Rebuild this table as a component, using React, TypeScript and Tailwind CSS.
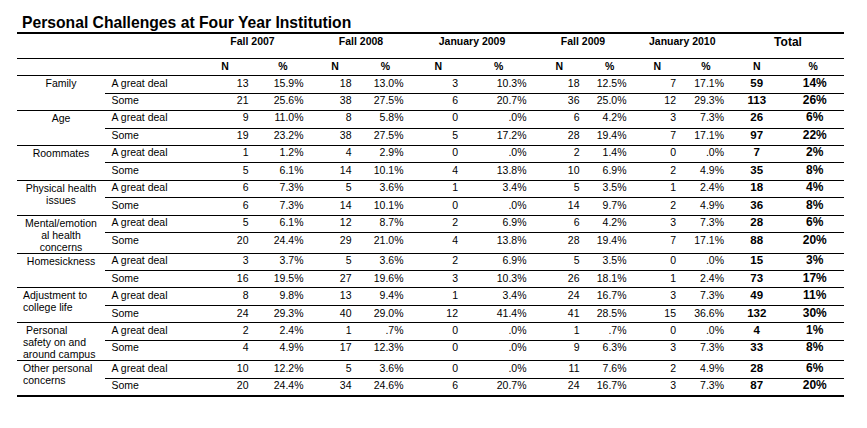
import React from 'react';

type Group = {
    label: React.ReactNode;
    align: 'center' | 'left';
    rows: [string[], string[]];
};

const groups: Group[] = [
    { label: 'Family', align: 'center', rows: [
        ['13', '15.9%', '18', '13.0%', '3', '10.3%', '18', '12.5%', '7', '17.1%', '59', '14%'],
        ['21', '25.6%', '38', '27.5%', '6', '20.7%', '36', '25.0%', '12', '29.3%', '113', '26%'],
    ] },
    { label: 'Age', align: 'center', rows: [
        ['9', '11.0%', '8', '5.8%', '0', '.0%', '6', '4.2%', '3', '7.3%', '26', '6%'],
        ['19', '23.2%', '38', '27.5%', '5', '17.2%', '28', '19.4%', '7', '17.1%', '97', '22%'],
    ] },
    { label: 'Roommates', align: 'center', rows: [
        ['1', '1.2%', '4', '2.9%', '0', '.0%', '2', '1.4%', '0', '.0%', '7', '2%'],
        ['5', '6.1%', '14', '10.1%', '4', '13.8%', '10', '6.9%', '2', '4.9%', '35', '8%'],
    ] },
    { label: <>Physical health<br />issues</>, align: 'center', rows: [
        ['6', '7.3%', '5', '3.6%', '1', '3.4%', '5', '3.5%', '1', '2.4%', '18', '4%'],
        ['6', '7.3%', '14', '10.1%', '0', '.0%', '14', '9.7%', '2', '4.9%', '36', '8%'],
    ] },
    { label: <>Mental/emotion<br />al health<br />concerns</>, align: 'center', rows: [
        ['5', '6.1%', '12', '8.7%', '2', '6.9%', '6', '4.2%', '3', '7.3%', '28', '6%'],
        ['20', '24.4%', '29', '21.0%', '4', '13.8%', '28', '19.4%', '7', '17.1%', '88', '20%'],
    ] },
    { label: 'Homesickness', align: 'center', rows: [
        ['3', '3.7%', '5', '3.6%', '2', '6.9%', '5', '3.5%', '0', '.0%', '15', '3%'],
        ['16', '19.5%', '27', '19.6%', '3', '10.3%', '26', '18.1%', '1', '2.4%', '73', '17%'],
    ] },
    { label: <>Adjustment to<br />college life</>, align: 'left', rows: [
        ['8', '9.8%', '13', '9.4%', '1', '3.4%', '24', '16.7%', '3', '7.3%', '49', '11%'],
        ['24', '29.3%', '40', '29.0%', '12', '41.4%', '41', '28.5%', '15', '36.6%', '132', '30%'],
    ] },
    { label: <>{'\u00a0'}Personal<br />safety on and<br />around campus</>, align: 'left', rows: [
        ['2', '2.4%', '1', '.7%', '0', '.0%', '1', '.7%', '0', '.0%', '4', '1%'],
        ['4', '4.9%', '17', '12.3%', '0', '.0%', '9', '6.3%', '3', '7.3%', '33', '8%'],
    ] },
    { label: <>Other personal<br />concerns</>, align: 'left', rows: [
        ['10', '12.2%', '5', '3.6%', '0', '.0%', '11', '7.6%', '2', '4.9%', '28', '6%'],
        ['20', '24.4%', '34', '24.6%', '6', '20.7%', '24', '16.7%', '3', '7.3%', '87', '20%'],
    ] },
];

// width + alignment for the 12 number columns
const cols = [
    { head: 'N', cls: 'w-[61px] text-right pr-[7px]' },
    { head: '%', cls: 'w-[55px] text-right pr-[7px]' },
    { head: 'N', cls: 'w-[49px] text-right pr-[8px]' },
    { head: '%', cls: 'w-[52px] text-right pr-[8px]' },
    { head: 'N', cls: 'w-[53.5px] text-right pr-[7px]' },
    { head: '%', cls: 'w-[67.5px] text-right pr-[6px]' },
    { head: 'N', cls: 'w-[53.5px] text-right pr-[6.5px]' },
    { head: '%', cls: 'w-[47.5px] text-right pr-[7px]' },
    { head: 'N', cls: 'w-[47.5px] text-right pr-[5px]' },
    { head: '%', cls: 'w-[50px] text-right pr-[7px]' },
    { head: 'N', cls: 'w-[51.5px] text-center font-bold text-[11.5px]' },
    { head: '%', cls: 'w-[61.5px] text-center font-bold text-[12px] pl-[3px]' },
];

const headWidths = ['w-[61px]', 'w-[55px]', 'w-[49px]', 'w-[52px]', 'w-[53.5px]', 'w-[67.5px]', 'w-[53.5px]', 'w-[47.5px]', 'w-[47.5px]', 'w-[50px]', 'w-[51.5px]', 'w-[61.5px]'];

const periods = [
    { name: 'Fall 2007', cls: 'w-[116px]' },
    { name: 'Fall 2008', cls: 'w-[101px]' },
    { name: 'January 2009', cls: 'w-[121px]' },
    { name: 'Fall 2009', cls: 'w-[101px]' },
    { name: 'January 2010', cls: 'w-[97.5px]' },
];

const DataRow: React.FC<{ label: string; values: string[]; last?: boolean }> = ({ label, values, last }) => (
    <div className={last ? 'flex flex-1 min-h-[16.2px] pt-[0.5px] leading-[12px]' : 'flex h-[16.2px] box-content border-b border-black pt-[0.5px] leading-[12px]'}>
        <div className="w-[89.5px] pl-[6.5px]">{label}</div>
        {values.map((v, i) => (
            <div key={i} className={cols[i].cls}>{v}</div>
        ))}
    </div>
);

export default function App() {
    return (
        <div className="min-h-screen bg-white pt-[14px] pl-[17px] text-black font-['Liberation_Sans',Arial,sans-serif]">
            <h1 className="pl-[5px] text-[15.7px] font-bold leading-[17px]">Personal Challenges at Four Year Institution</h1>
            <div className="mt-[1px] w-[827px] border-t-2 border-b-2 border-black text-[10.5px]">
                {/* header: periods */}
                <div className="flex h-[25px] border-b border-black font-bold leading-[12px]">
                    <div className="w-[177.5px]" />
                    {periods.map((p) => (
                        <div key={p.name} className={`${p.cls} text-center pt-[1px]`}>{p.name}</div>
                    ))}
                    <div className="w-[113px] text-center text-[12px] pt-[2px] pl-[1px]">Total</div>
                </div>
                {/* header: N / % */}
                <div className="flex h-[17px] border-b border-black font-bold leading-[12px] pt-[1px]">
                    <div className="w-[177.5px]" />
                    {cols.map((c, i) => (
                        <div key={i} className={`${headWidths[i]} text-center`}>{c.head}</div>
                    ))}
                </div>
                {groups.map((g, gi) => (
                    <div key={gi} className={gi === groups.length - 1 ? 'flex' : 'flex border-b border-black'}>
                        <div className={g.align === 'center' ? 'w-[88px] text-center pt-[1px] leading-[12px]' : 'w-[88px] pl-[6px] pt-[1px] leading-[12px]'}>
                            {g.label}
                        </div>
                        <div className="flex flex-1 flex-col">
                            <DataRow label="A great deal" values={g.rows[0]} />
                            <DataRow label="Some" values={g.rows[1]} last />
                        </div>
                    </div>
                ))}
            </div>
        </div>
    );
}
